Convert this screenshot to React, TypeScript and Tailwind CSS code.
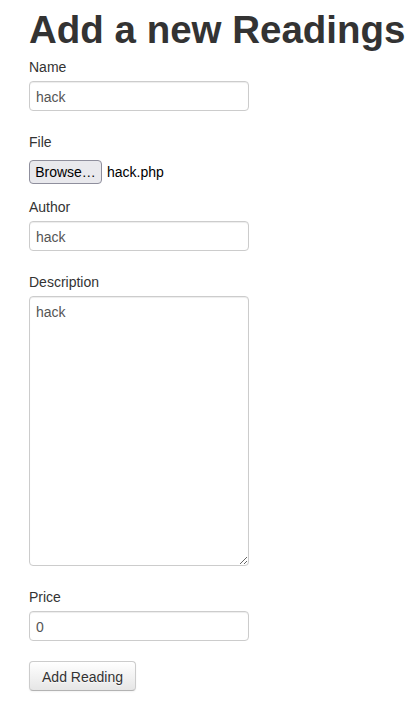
import React from "react";

const inputCls =
  "block w-[220px] h-[30px] px-[6px] pt-[5px] pb-[3px] text-[14px] leading-[20px] text-[#555] bg-white border border-[#ccc] rounded-[4px] shadow-[inset_0_1px_1px_rgba(0,0,0,0.075)] outline-none";

export default function App() {
  return (
    <div
      className="min-h-[718px] bg-white pl-[29px] pt-[10px] text-[14px] leading-[20px] text-[#333]"
      style={{ fontFamily: '"Liberation Sans", Arial, Helvetica, sans-serif' }}
    >
      <h1 className="text-[38.5px] leading-[40px] font-bold text-[#333] whitespace-nowrap">
        Add a new Readings
      </h1>
      <form className="flex flex-col items-start" onSubmit={(e) => e.preventDefault()}>
        <label className="block mt-[7px] h-[20px]">Name</label>
        <input className={`${inputCls} mt-[4px]`} defaultValue="hack" />

        <label className="block mt-[21px] h-[20px]">File</label>
        <div className="flex items-center mt-[8px] h-[24px]">
          <button
            type="button"
            className="h-[24px] w-[73px] px-[4px] text-[14px] leading-[20px] text-black bg-[#e9e9ed] border border-[#8f8f9d] rounded-[4px] text-center"
          >
            Browse…
          </button>
          <span className="ml-[5px] text-black">hack.php</span>
        </div>

        <label className="block mt-[13px] h-[20px]">Author</label>
        <input className={`${inputCls} mt-[4px]`} defaultValue="hack" />

        <label className="block mt-[21px] h-[20px]">Description</label>
        <textarea
          className="block mt-[4px] w-[220px] h-[270px] px-[6px] pt-[5px] pb-[3px] text-[14px] leading-[20px] text-[#555] bg-white border border-[#ccc] rounded-[4px] shadow-[inset_0_1px_1px_rgba(0,0,0,0.075)] outline-none resize"
          style={{ fontFamily: '"Liberation Sans", Arial, Helvetica, sans-serif' }}
          defaultValue="hack"
        />

        <label className="block mt-[21px] h-[20px]">Price</label>
        <input className={`${inputCls} mt-[4px]`} defaultValue="0" />

        <button
          type="submit"
          className="mt-[20px] h-[30px] w-[107px] px-[12px] pt-[1px] text-[14px] leading-[20px] text-[#333] bg-gradient-to-b from-white to-[#e6e6e6] border border-[#ccc] border-b-[#b3b3b3] rounded-[4px] shadow-[inset_0_1px_0_rgba(255,255,255,0.2),0_1px_2px_rgba(0,0,0,0.05)] [text-shadow:0_1px_1px_rgba(255,255,255,0.75)]"
        >
          Add Reading
        </button>
      </form>
    </div>
  );
}
